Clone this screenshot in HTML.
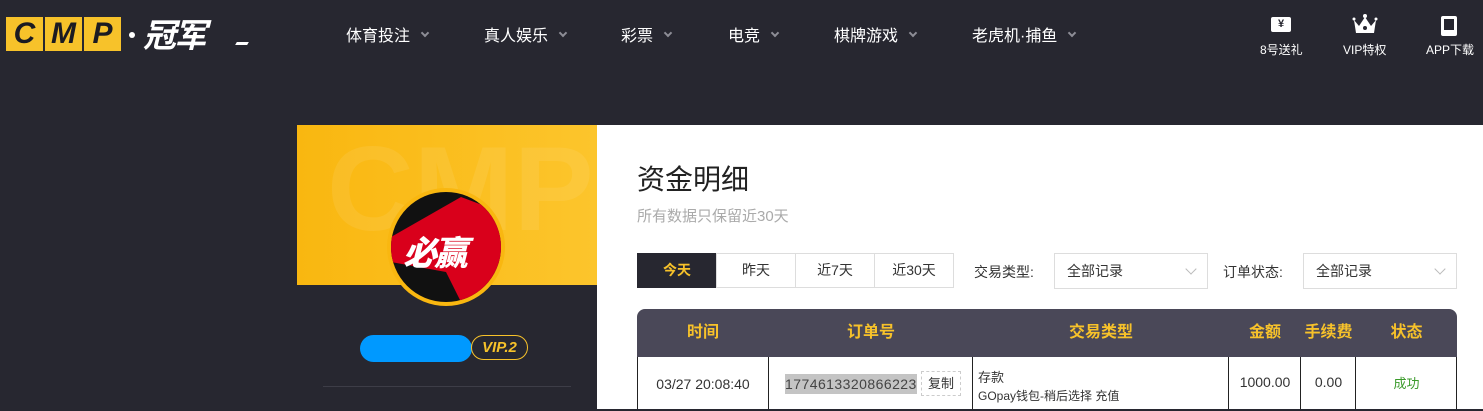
<!DOCTYPE html>
<html><head><meta charset="utf-8"><style>
*{margin:0;padding:0;box-sizing:border-box}
body{width:1483px;height:409px;overflow:hidden;background:#272730;font-family:"Liberation Sans","Noto Sans CJK SC",sans-serif;position:relative}
.abs{position:absolute}
.nav{color:#fff;font-size:16px;top:22px}
.nav i{display:inline-block;margin-left:12px;width:6px;height:6px;border-right:2.5px solid #8d8d96;border-bottom:2.5px solid #8d8d96;transform:rotate(45deg);vertical-align:5px}
.ri{color:#fff;font-size:12px;top:41px;text-align:center}
.lb{background:#f7c22a;color:#1b1b22;font:italic 900 30px "Liberation Sans",sans-serif;width:37px;height:34px;top:17px;text-align:center;line-height:34px}
.tab{top:253px;height:35px;border:1px solid #ddd;font-size:14px;text-align:center;line-height:33px;color:#333;background:#fff}
.sel{top:253px;height:36px;border:1px solid #ddd;font-size:14px;line-height:34px;padding-left:12px;color:#333;background:#fff}
.sel:after{content:"";position:absolute;right:12px;top:11px;width:7px;height:7px;border-right:1px solid #bbb;border-bottom:1px solid #bbb;transform:rotate(45deg)}
.th{top:309px;height:48px;line-height:48px;color:#f7c22a;font-weight:bold;font-size:16px;text-align:center}
.td{top:357px;font-size:14px;color:#333;text-align:center;line-height:54px}
.vl{top:357px;width:1px;height:52px;background:#222}
</style></head><body>
<div class="abs lb" style="left:6px">C</div>
<div class="abs lb" style="left:45px">M</div>
<div class="abs lb" style="left:84px">P</div>
<div class="abs" style="left:129px;top:32px;width:6px;height:6px;background:#fff;border-radius:50%"></div>
<div class="abs" style="left:143px;top:13px;color:#fff;font:italic bold 33px 'Noto Sans CJK SC',sans-serif;letter-spacing:-2px;line-height:40px">冠军</div>
<div class="abs" style="left:236px;top:42px;width:12px;height:3px;background:#fff;transform:skewX(-30deg)"></div>
<div class="abs nav" style="left:346px">体育投注<i></i></div>
<div class="abs nav" style="left:484px">真人娱乐<i></i></div>
<div class="abs nav" style="left:621px">彩票<i></i></div>
<div class="abs nav" style="left:728px">电竞<i></i></div>
<div class="abs nav" style="left:834px">棋牌游戏<i></i></div>
<div class="abs nav" style="left:972px">老虎机·捕鱼<i></i></div>
<div class="abs" style="left:1271px;top:17px;width:20px;height:15px;background:#fff;border-radius:2px;color:#272730;font-size:11px;font-weight:bold;text-align:center;line-height:15px">¥</div>
<svg class="abs" style="left:1352px;top:13px" width="26" height="22"><path d="M2 7 L7 13 L13 4 L19 13 L24 7 L22 20 L4 20Z" fill="#fff"/><circle cx="13" cy="3" r="2" fill="#fff"/><circle cx="2" cy="6" r="1.5" fill="#fff"/><circle cx="24" cy="6" r="1.5" fill="#fff"/><circle cx="13" cy="15" r="2" fill="#272730"/></svg>
<div class="abs" style="left:1441px;top:16px;width:16px;height:20px;background:#fff;border-radius:2px"><div style="position:absolute;left:3px;top:3px;width:10px;height:11px;background:#272730"></div></div>
<div class="abs ri" style="left:1260px">8号送礼</div>
<div class="abs ri" style="left:1343px">VIP特权</div>
<div class="abs ri" style="left:1426px">APP下载</div>

<div class="abs" style="left:297px;top:125px;width:300px;height:160px;background:linear-gradient(90deg,#f9b710,#fcc52c);overflow:hidden"><div style="position:absolute;left:30px;top:-5px;font:bold 120px 'Liberation Sans',sans-serif;color:rgba(255,255,255,.08)">CMP</div></div>
<div class="abs" style="left:297px;top:285px;width:300px;height:124px;background:#272730"></div>
<div class="abs" style="left:387px;top:188px;width:118px;height:118px;border-radius:50%;background:#f9b710"></div>
<div class="abs" style="left:391px;top:192px;width:110px;height:110px;border-radius:50%;overflow:hidden;background:#111">
<svg width="110" height="110" style="position:absolute;left:0;top:0"><path d="M0 45 L70 5 L110 20 L110 110 L70 110 L55 80 L0 70Z" fill="#d9001b"/></svg>
<div style="position:absolute;left:12px;top:34px;color:#fff;font:italic 900 34px 'Noto Sans CJK SC',sans-serif;letter-spacing:-3px">必赢</div></div>
<div class="abs" style="left:360px;top:335px;width:112px;height:27px;border-radius:14px;background:#0099ff"></div>
<div class="abs" style="left:471px;top:335px;width:57px;height:25px;border-radius:13px;border:1px solid #f7c22a;color:#f7c22a;font:italic bold 15px 'Liberation Sans',sans-serif;text-align:center;line-height:23px">VIP.2</div>
<div class="abs" style="left:323px;top:386px;width:248px;height:1px;background:#3d3d47"></div>

<div class="abs" style="left:597px;top:125px;width:886px;height:284px;background:#fff"></div>
<div class="abs" style="left:637px;top:158px;font-size:28px;color:#222">资金明细</div>
<div class="abs" style="left:637px;top:205px;font-size:15px;color:#aaa">所有数据只保留近30天</div>
<div class="abs tab" style="left:637px;width:80px;background:#272730;color:#f7c22a;font-weight:bold;border-color:#272730">今天</div>
<div class="abs tab" style="left:716px;width:80px">昨天</div>
<div class="abs tab" style="left:795px;width:80px">近7天</div>
<div class="abs tab" style="left:874px;width:80px">近30天</div>
<div class="abs" style="left:974px;top:262px;font-size:14px;color:#333">交易类型:</div>
<div class="abs sel" style="left:1054px;width:154px">全部记录</div>
<div class="abs" style="left:1223px;top:262px;font-size:14px;color:#333">订单状态:</div>
<div class="abs sel" style="left:1303px;width:154px">全部记录</div>

<div class="abs" style="left:637px;top:309px;width:820px;height:48px;background:#4a4858;border-radius:8px 8px 0 0"></div>
<div class="abs th" style="left:637px;width:132px">时间</div>
<div class="abs th" style="left:769px;width:204px">订单号</div>
<div class="abs th" style="left:973px;width:256px">交易类型</div>
<div class="abs th" style="left:1229px;width:72px">金额</div>
<div class="abs th" style="left:1301px;width:55px">手续费</div>
<div class="abs th" style="left:1356px;width:101px">状态</div>
<div class="abs vl" style="left:637px"></div>
<div class="abs vl" style="left:768px"></div>
<div class="abs vl" style="left:972px"></div>
<div class="abs vl" style="left:1228px"></div>
<div class="abs vl" style="left:1300px"></div>
<div class="abs vl" style="left:1355px"></div>
<div class="abs vl" style="left:1456px"></div>
<div class="abs td" style="left:637px;width:132px">03/27 20:08:40</div>
<div class="abs" style="left:785px;top:374px;height:20px;background:#c4c4c4;font-size:14px;line-height:20px;color:#444;letter-spacing:0.45px">1774613320866223</div>
<div class="abs" style="left:921px;top:371px;width:40px;height:25px;border:1px dashed #ccc;font-size:13px;line-height:23px;text-align:center;color:#333">复制</div>
<div class="abs" style="left:978px;top:367px;font-size:13px;color:#333">存款</div>
<div class="abs" style="left:978px;top:387px;font-size:12px;color:#333">GOpay钱包-稍后选择 充值</div>
<div class="abs td" style="left:1229px;width:72px;top:355px">1000.00</div>
<div class="abs td" style="left:1301px;width:55px;top:355px">0.00</div>
<div class="abs td" style="left:1356px;width:101px;color:#3a9a2a;font-size:13px">成功</div>
</body></html>
